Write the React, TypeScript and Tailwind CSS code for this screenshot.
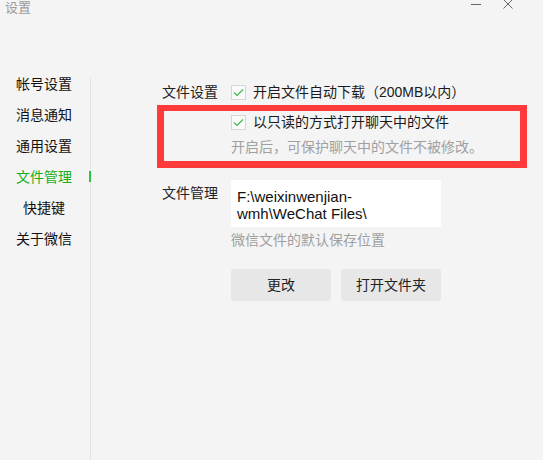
const font = { fontFamily: '"Liberation Sans", "Noto Sans CJK SC", sans-serif' };

const menu = ["帐号设置", "消息通知", "通用设置", "文件管理", "快捷键", "关于微信"];

function Check() {
  return (
    <span className="flex h-[15px] w-[15px] shrink-0 items-center justify-center border border-[#d6d6d6] bg-[#fafafa]">
      <svg width="11" height="9" viewBox="0 0 11 9" fill="none">
        <path d="M1 4.5 L4 7.5 L10 1.5" stroke="#3fb950" strokeWidth="1.2" />
      </svg>
    </span>
  );
}

export default function App() {
  return (
    <div style={font} className="relative h-[460px] w-[543px] overflow-hidden bg-[#f4f4f4] text-[#1a1a1a]">
      {/* title bar */}
      <div className="flex h-[68px] items-start justify-between">
        <div className="pl-[5px] text-[13px] leading-[16px] text-[#9a9a9a]">设置</div>
        <div className="flex items-start gap-[22px] pr-[30px]">
          <span className="mt-[4px] block h-px w-[10px] bg-[#666]" />
          <svg width="10" height="10" viewBox="0 0 10 10" className="-mt-[1px]">
            <path d="M0.5 0.5 L9.5 9.5 M9.5 0.5 L0.5 9.5" stroke="#666" strokeWidth="1" />
          </svg>
        </div>
      </div>

      <div className="flex h-[392px]">
        {/* sidebar */}
        <div className="flex shrink-0">
          <div className="w-[88px]">
            {menu.map((m) => (
              <div
                key={m}
                className={
                  "relative flex h-[31px] items-center justify-center text-sm " +
                  (m === "文件管理" ? "text-[#1aad19]" : "text-[#111]")
                }
              >
                {m}
                {m === "文件管理" ? (
                  <span className="absolute right-[-3px] top-[10px] z-10 h-[11px] w-[2px] bg-[#2dc33f]" />
                ) : null}
              </div>
            ))}
          </div>
          <div className="ml-[2px] mt-[10px] w-px bg-[#e3e3e3]" />
        </div>

        {/* content */}
        <div className="flex-1 pl-[71px] text-sm">
          <div className="mt-[14px] flex h-[20px] items-center">
            <span className="w-[69px] text-[#222]">文件设置</span>
            <Check />
            <span className="ml-[7px]">开启文件自动下载（200MB以内）</span>
          </div>
          <div className="mt-[10px] flex h-[20px] items-center pl-[69px]">
            <Check />
            <span className="ml-[7px]">以只读的方式打开聊天中的文件</span>
          </div>
          <div className="mt-[5px] h-[20px] pl-[69px] leading-[20px] text-[#a0a0a0]">开启后，可保护聊天中的文件不被修改。</div>

          <div className="mt-[23px] flex">
            <span className="mt-[3px] w-[69px] leading-[20px] text-[#222]">文件管理</span>
            <div className="h-[47px] w-[210px] bg-white pl-[6px] pt-[8px] text-[15px] leading-[17px] text-[#111]">
              F:\weixinwenjian-
              <br />
              wmh\WeChat Files\
            </div>
          </div>
          <div className="mt-[3px] h-[20px] pl-[69px] leading-[20px] text-[#a0a0a0]">微信文件的默认保存位置</div>

          <div className="mt-[19px] flex gap-[10px] pl-[69px]">
            <button className="h-[32px] w-[100px] rounded-[3px] bg-[#e7e7e7] text-[#222]">更改</button>
            <button className="h-[32px] w-[100px] rounded-[3px] bg-[#e7e7e7] text-[#222]">打开文件夹</button>
          </div>
        </div>
      </div>

      {/* annotation */}
      <div className="pointer-events-none absolute left-[157px] top-[105px] h-[63px] w-[370px] border-[7px] border-t-[6px] border-[#ff3a3a]" />
    </div>
  );
}
